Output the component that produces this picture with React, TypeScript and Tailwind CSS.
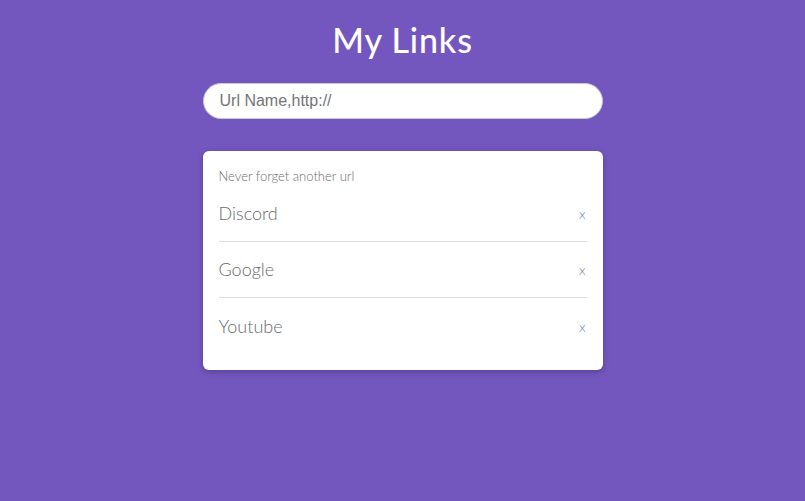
import React from 'react';

const links = ['Discord', 'Google', 'Youtube'];

const App: React.FC = () => {
  return (
    <div className="min-h-screen w-full bg-[#7357bf] pt-[20px] flex flex-col items-center" style={{ fontFamily: 'Lato, "Open Sans", sans-serif' }}>
      {/* Title */}
      <h1 className="text-[34px] leading-[40px] font-medium text-white tracking-wide">My Links</h1>

      {/* Input */}
      <input
        type="text"
        placeholder="Url Name,http://"
        className="mt-[23px] w-[400px] h-[36px] rounded-full bg-white border border-[#c8c8d0] px-4 text-[16px] text-[#555] placeholder:text-[#757575] outline-none"
        style={{ fontFamily: '"Liberation Sans", Arial, sans-serif' }}
      />

      {/* Card */}
      <div className="mt-[32px] w-[400px] bg-white rounded-md shadow-[0_2px_6px_rgba(0,0,0,0.25)] px-4 pt-4 pb-4">
        <p className="text-[13px] leading-[19px] font-light text-[#6b6b6b]">Never forget another url</p>
        <ul>
          {links.map((name, i) => (
            <li
              key={name}
              className={`h-[56px] flex items-center justify-between ${i < links.length - 1 ? 'border-b border-[#dcdcdc]' : ''}`}
            >
              <span className="text-[18px] font-light text-[#6a6a6a]">{name}</span>
              <span className="text-[14px] font-light text-[#6b7f99] pr-[1px]">x</span>
            </li>
          ))}
        </ul>
      </div>
    </div>
  );
};

export default App;
